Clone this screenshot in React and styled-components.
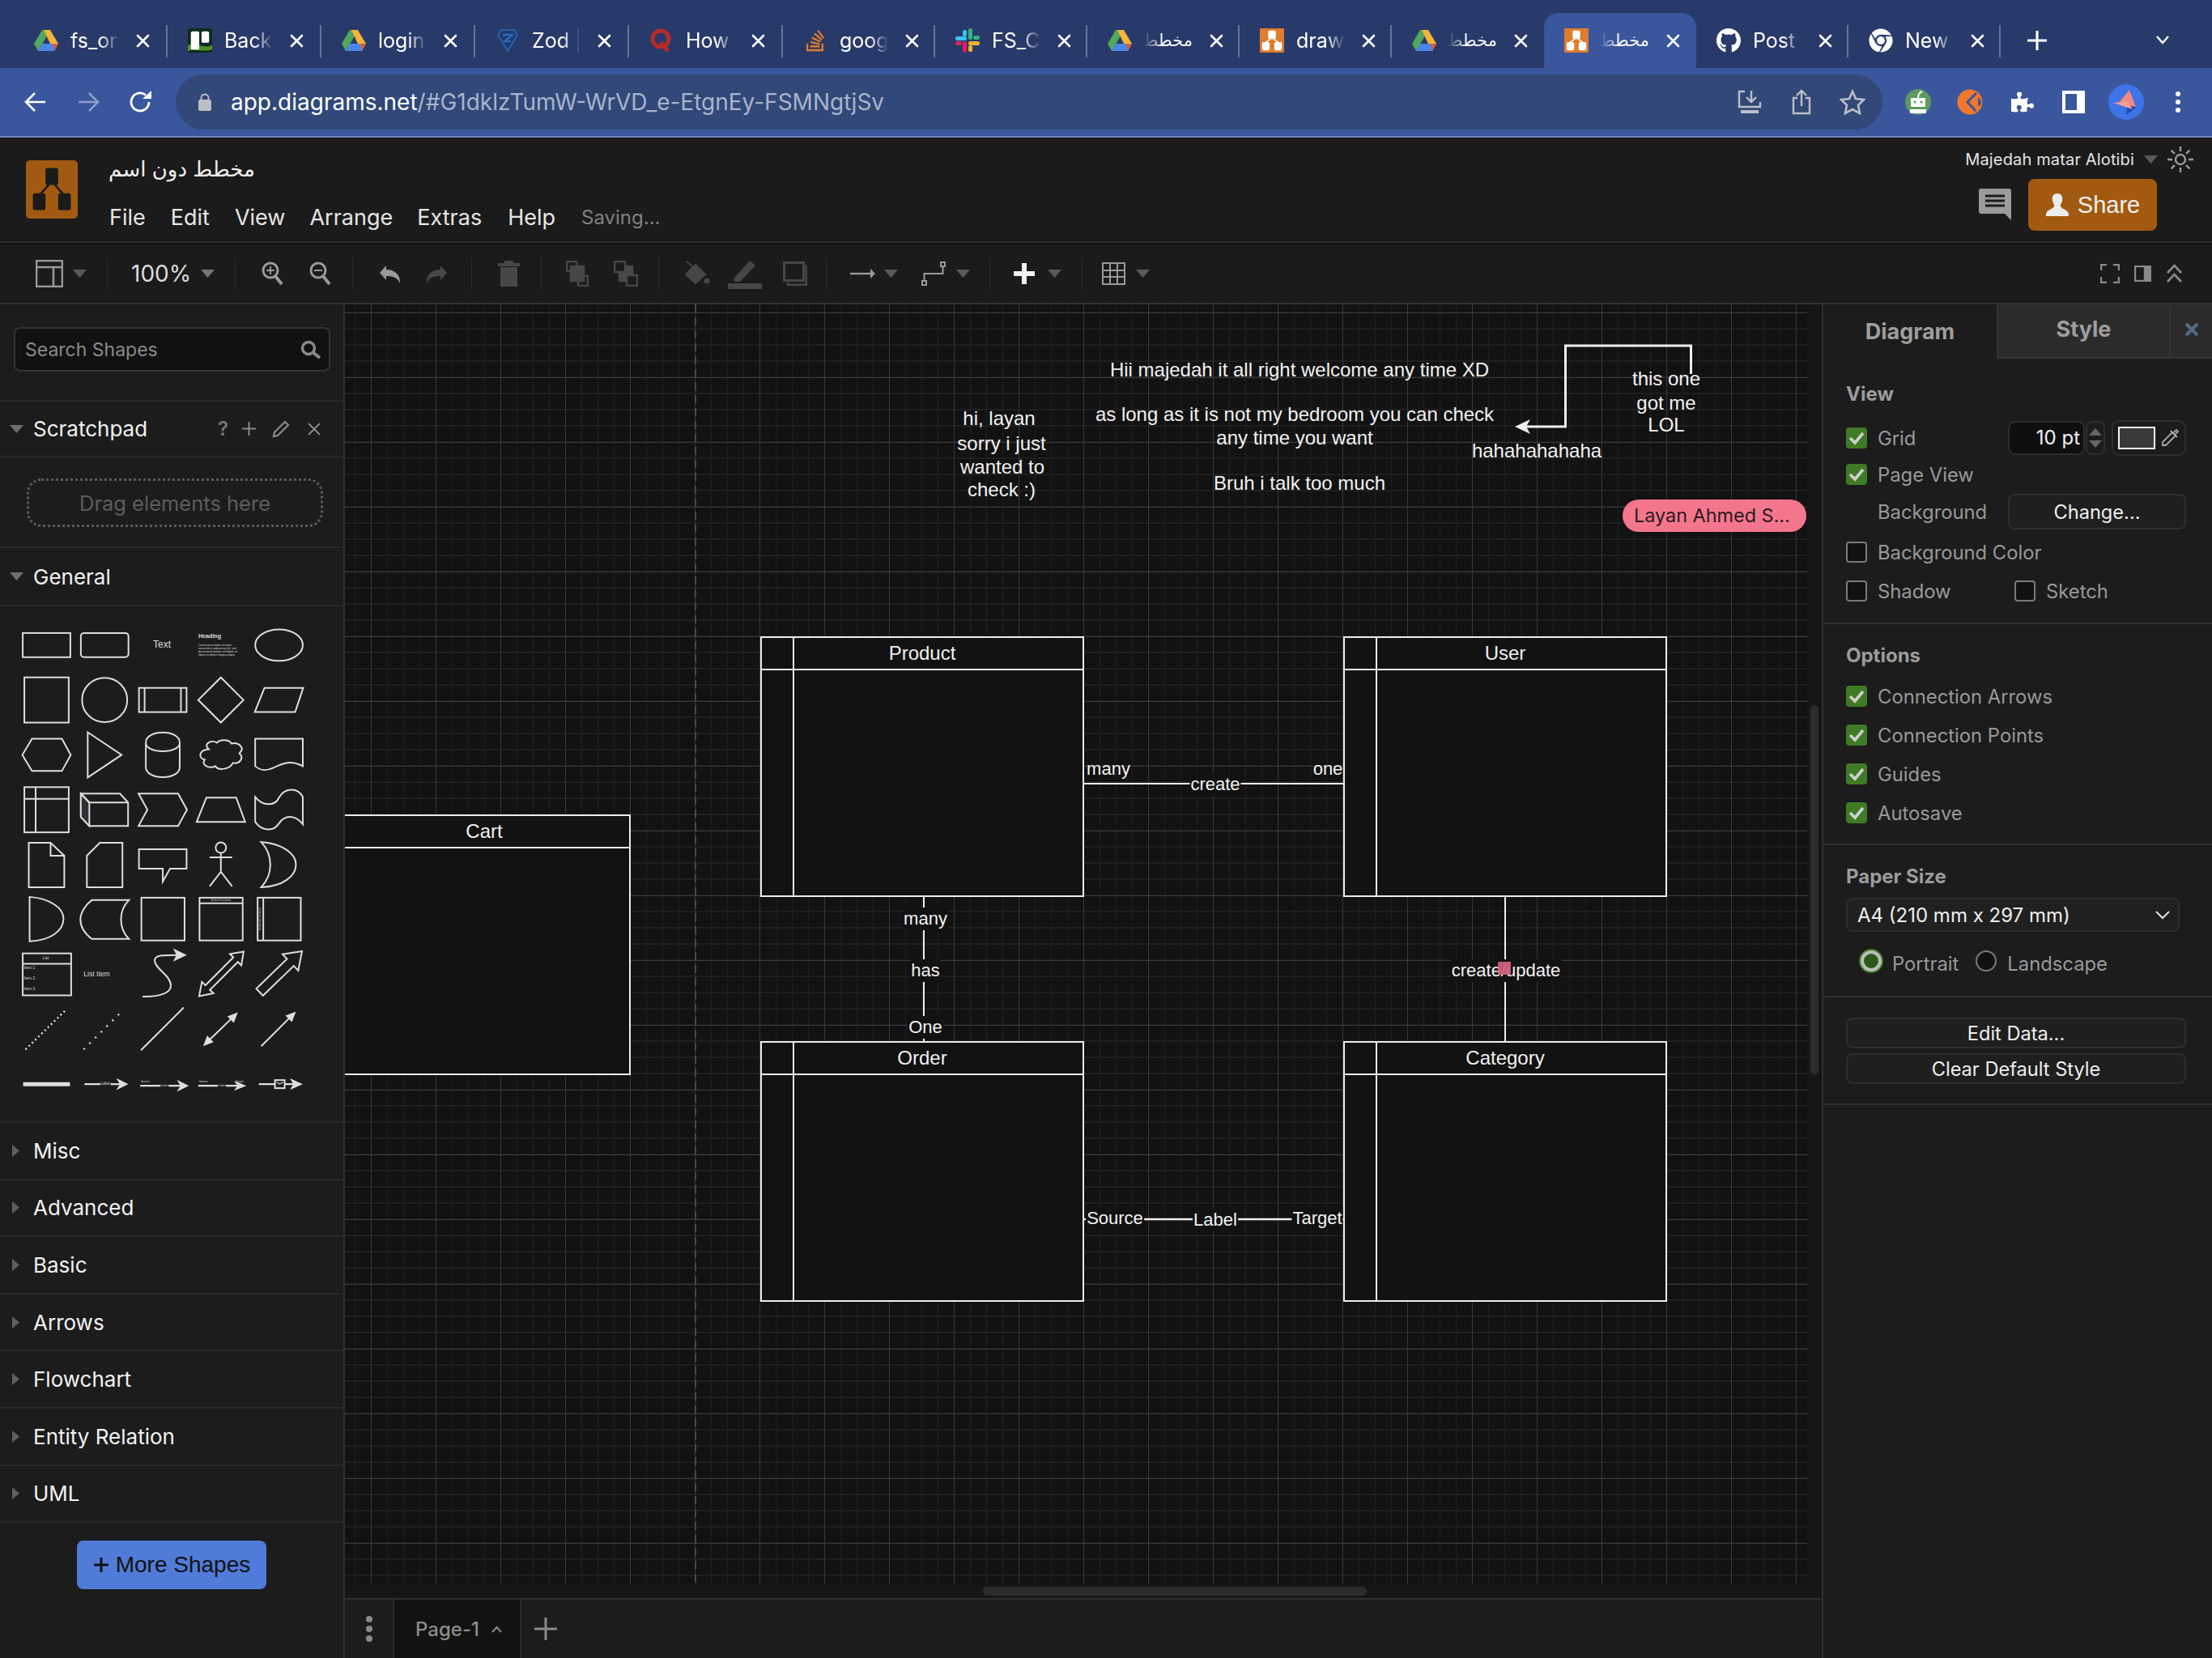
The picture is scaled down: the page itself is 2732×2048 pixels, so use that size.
import React from "react";
import styled, { createGlobalStyle } from "styled-components";
import { FaGithub, FaChrome, FaStackOverflow, FaPuzzlePiece } from "react-icons/fa";

const Global = createGlobalStyle`
  html, body { margin: 0; padding: 0; background: #1c1c1c; }
  body { font-family: Inter, "DejaVu Sans", sans-serif; width: 2732px; height: 2048px; overflow: hidden; }
  * { box-sizing: border-box; }
`;

/* ---------- browser chrome ---------- */
const Shell = styled.div`width: 2732px; height: 2048px; display: flex; flex-direction: column; overflow: hidden;`;
const TabStrip = styled.div`height: 84px; background: #283a69; padding: 16px 0 0 17px; display: flex; align-items: stretch; flex: none;`;
const Tab = styled.div`
  position: relative; width: ${p => p.$w}px; display: flex; align-items: center; padding: 0 0 0 25px; color: #fff; flex: none;
  background: ${p => (p.$active ? "#3a569c" : "transparent")};
  border-radius: ${p => (p.$active ? "18px 18px 0 0" : "0")};
  &::after {
    content: ""; display: ${p => (p.$noSep ? "none" : "block")}; position: absolute; right: 0; top: 15px; width: 2px; height: 40px; background: #65759c;
  }
`;
const TabIcon = styled.span`width: 30px; height: 32px; display: flex; align-items: center; justify-content: center; flex: none;`;
const TabTitle = styled.span`
  width: 60px; margin-left: 15px; overflow: hidden; white-space: nowrap; line-height: 32px; flex: none;
  direction: ${p => (p.$rtl ? "rtl" : "ltr")};
  font-size: ${p => (p.$rtl ? "21px" : "25px")};
  -webkit-mask-image: linear-gradient(${p => (p.$rtl ? "to left" : "to right")}, #000 62%, transparent 100%);
  mask-image: linear-gradient(${p => (p.$rtl ? "to left" : "to right")}, #000 62%, transparent 100%);
`;
const TabClose = styled.svg`width: 17px; height: 17px; margin-left: 21px; flex: none;`;
const NewTab = styled.svg`width: 26px; height: 26px; margin: 21px 0 0 32px; flex: none;`;
const TabChevron = styled.svg`width: 18px; height: 12px; margin: 27px 0 0 133px; flex: none;`;

const ChromeBar = styled.div`
  height: 86px; background: #3a569c; border-bottom: 2px solid #6f86bb; display: flex; align-items: center; padding-left: 30px; flex: none;
`;
const NavIcon = styled.svg`width: 28px; height: 28px; margin-right: ${p => p.$mr || 37}px; flex: none;`;
const Omnibox = styled.div`
  width: 2108px; height: 68px; margin-left: -8px; border-radius: 34px; background: #314878; display: flex; align-items: center; padding: 0 21px 0 28px; flex: none;
`;
const Url = styled.div`margin-left: 24px; font-size: 28px; color: #fff; white-space: nowrap; flex: 1;`;
const UrlDim = styled.span`color: #a9b4cc;`;
const OmniIcon = styled.svg`width: 32px; height: 32px; margin-left: ${p => p.$ml || 0}px; flex: none;`;
const ExtRow = styled.div`display: flex; align-items: center; flex: none;`;
const ExtSlot = styled.span`display: flex; margin-left: ${p => p.$ml}px; color: #fff;`;

/* ---------- app header ---------- */
const Header = styled.header`height: 130px; background: #1b1b1b; border-bottom: 2px solid #2e2e2e; display: flex; padding-left: 32px; flex: none;`;
const Logo = styled.div`width: 64px; height: 72px; margin-top: 28px; background: #a25a12; border-radius: 5px; display: flex; align-items: center; justify-content: center; flex: none;`;
const TitleCol = styled.div`margin-left: 39px; flex: 1;`;
const DocTitle = styled.div`margin-top: 19px; width: 180px; height: 40px; line-height: 40px; font-size: 26px; color: #f0f0f0; white-space: nowrap; direction: rtl;`;
const MenuBar = styled.nav`margin-top: 21px; display: flex; align-items: center; height: 36px;`;
const MenuItem = styled.span`font-size: 27px; color: #e6e6e6; margin-right: ${p => p.$mr}px;`;
const Saving = styled.span`font-size: 24px; color: #808080;`;
const HeadRight = styled.div`width: 310px; display: flex; flex-direction: column; align-items: flex-end; padding-right: 22px; flex: none;`;
const UserRow = styled.div`margin-top: 10px; height: 34px; display: flex; align-items: center;`;
const UserName = styled.span`font-size: 20px; color: #e4e4e4; white-space: nowrap; letter-spacing: .15px;`;
const SunIcon = styled.svg`width: 34px; height: 34px; margin-left: 11px;`;
const ShareRow = styled.div`margin-top: 7px; padding-right: 46px; display: flex; align-items: center;`;
const ShareBtn = styled.div`
  width: 159px; height: 64px; margin-left: 21px; background: #a25a10; border-radius: 8px; display: flex; align-items: center; justify-content: center; gap: 10px;
  color: #f0f0f0; font-size: 29px; font-family: "Liberation Sans", sans-serif;
`;

/* ---------- toolbar ---------- */
const Toolbar = styled.div`height: 76px; background: #1b1b1b; border-top: 2px solid #121212; border-bottom: 2px solid #333; display: flex; align-items: center; flex: none;`;
const ToolGroup = styled.div`
  width: ${p => p.$w}px; height: 40px; padding-left: ${p => p.$pl}px; gap: ${p => p.$gap || 0}px; display: flex; align-items: center; flex: none;
  border-right: ${p => (p.$last ? "none" : "1px solid #2b2b2b")};
`;
const ToolSvg = styled.svg`margin-left: ${p => p.$ml || 0}px; flex: none;`;
const ToolRight = styled.div`margin-left: auto; padding-right: 36px; display: flex; align-items: center; gap: 18px;`;
const ZoomValue = styled.span`font-size: 28px; color: #dcdcdc; width: 86px;`;
const Caret = styled.svg`width: 17px; height: 10px; flex: none; margin-left: ${p => p.$ml || 0}px;`;

/* ---------- body ---------- */
const Body = styled.div`flex: 1; min-height: 0; display: grid; grid-template-columns: 424px 1fr 482px;`;
const Sidebar = styled.aside`background: #1c1c1c; display: flex; flex-direction: column; min-height: 0;`;
const SearchWrap = styled.div`height: 120px; padding: 28px 16px 0 17px; border-bottom: 2px solid #292929;`;
const SearchBox = styled.div`height: 55px; background: #111; border: 2px solid #333; border-radius: 8px; display: flex; align-items: center; justify-content: space-between; padding: 0 10px 0 12px;`;
const SearchText = styled.span`font-size: 23px; color: #8a8a8a;`;
const SectionHead = styled.div`
  height: ${p => p.$h || 70}px; display: flex; align-items: center; border-bottom: 2px solid #292929; padding-left: ${p => (p.$open ? 12 : 15)}px; flex: none;
`;
const SectionLabel = styled.span`font-size: ${p => p.$size || 26}px; color: #f2f2f2; margin-left: ${p => p.$ml}px; flex: ${p => (p.$grow ? 1 : "none")};`;
const HeadTools = styled.div`display: flex; align-items: center; color: #8a8a8a; padding-right: 28px;`;
const HeadTool = styled.svg`margin-left: ${p => p.$ml}px; flex: none;`;
const QMark = styled.span`font-size: 24px; color: #777; font-weight: 600;`;
const DropWrap = styled.div`height: 112px; padding: 26px 25px 0 33px; border-bottom: 2px solid #292929; flex: none;`;
const DropZone = styled.div`height: 60px; border: 3px dotted #5a5a5a; border-radius: 18px; display: flex; align-items: center; justify-content: center; color: #5c5c5c; font-size: 25.5px;`;
const Palette = styled.svg`width: 424px; height: 638px; display: block; flex: none; border-bottom: 2px solid #292929;`;
const MoreWrap = styled.div`padding: 22px 0 0 95px;`;
const MoreBtn = styled.div`
  width: 234px; height: 60px; background: #507bd8; border-radius: 8px; display: flex; align-items: center; justify-content: center; gap: 8px;
  color: #111; font-size: 28px; font-family: "Liberation Sans", sans-serif;
`;

/* ---------- canvas ---------- */
const CanvasCol = styled.main`display: flex; flex-direction: column; min-width: 0; background: #161616; border-left: 2px solid #2e2e2e;`;
const CanvasArea = styled.div`flex: 1; position: relative; min-height: 0; overflow: hidden; border-bottom: 2px solid #2e2e2e;`;
const GridPane = styled.div`
  position: absolute; left: -2px; top: 0; width: 1808px; height: 1580px; overflow: hidden; background-color: #121212;
  background-image:
    linear-gradient(to bottom, #3a3a3a 1px, transparent 1px),
    linear-gradient(to right, #383838 1px, transparent 1px),
    linear-gradient(to bottom, #1f1f1f 2px, transparent 2px),
    linear-gradient(to right, #1f1f1f 1px, transparent 1px);
  background-size: 80px 80px, 80px 80px, 20px 20px, 20px 20px;
  background-position: 0 10px, 34px 0, 0 9px, 14px 0;
  font-family: "Liberation Sans", sans-serif; color: #f0f0f0;
`;
const Wires = styled.svg`position: absolute; left: 0; top: 0; width: 1808px; height: 1580px;`;
const Lane = styled.div`
  position: absolute; left: ${p => p.$x}px; top: ${p => p.$y}px; width: ${p => p.$w}px; height: 322px;
  background: #121212; border: 2px solid #ececec;
`;
const LaneHead = styled.div`height: 40px; line-height: 38px; text-align: center; font-size: 24px; border-bottom: 2px solid #ececec;`;
const LaneRail = styled.span`position: absolute; left: 38px; top: 0; bottom: 0; width: 2px; background: #ececec;`;
const Note = styled.div`
  position: absolute; left: ${p => p.$x}px; top: ${p => p.$y}px; transform: translate(-50%, -50%); white-space: nowrap; font-size: ${p => p.$size || 24}px; line-height: 28px; color: #f2f2f2;
  background: ${p => (p.$bg ? "#121212" : "transparent")}; padding: 0 ${p => (p.$bg ? 1 : 0)}px;
`;
const Pill = styled.div`
  position: absolute; left: 1580px; top: 241px; width: 227px; height: 40px; border-radius: 20px; background: #f4768c; color: #2a1a20; font-size: 23.4px; line-height: 40px; padding-left: 14px; white-space: nowrap; font-family: Inter, sans-serif;
`;
const RemoteCursor = styled.span`position: absolute; left: 1426px; top: 812px; width: 16px; height: 16px; background: #d1607b; opacity: .95;`;
const VScroll = styled.span`position: absolute; left: 1810px; top: 495px; width: 10px; height: 456px; border-radius: 5px; background: #2c2c2c;`;
const HScroll = styled.span`position: absolute; left: 788px; top: 1584px; width: 474px; height: 11px; border-radius: 5px; background: #2c2c2c;`;
const PageBar = styled.div`height: 72px; background: #1c1c1c; display: flex; align-items: stretch; flex: none;`;
const PageMenu = styled.div`width: 61px; display: flex; align-items: center; justify-content: center; border-right: 2px solid #2b2b2b;`;
const PageTab = styled.div`width: 157px; background: #121212; border-right: 2px solid #2b2b2b; display: flex; align-items: center; padding-left: 26px; gap: 15px; color: #8c8c8c; font-size: 24px; font-weight: 500;`;
const PageAdd = styled.div`display: flex; align-items: center; padding-left: 16px;`;

/* ---------- right panel ---------- */
const Panel = styled.aside`background: #1c1c1c; border-left: 2px solid #2e2e2e; display: flex; flex-direction: column;`;
const PanelTabs = styled.div`height: 67px; display: flex; flex: none;`;
const PanelTab = styled.div`
  width: ${p => p.$w}px; display: flex; align-items: center; justify-content: center; font-size: 27px; font-weight: 700; color: #9e9e9e;
  background: ${p => (p.$active ? "#1c1c1c" : "#2b2b2b")};
  border-left: ${p => (p.$active ? "none" : "2px solid #333")};
  border-bottom: ${p => (p.$active ? "none" : "2px solid #333")};
  padding-bottom: ${p => (p.$active ? 0 : 4)}px;
`;
const PanelClose = styled(PanelTab)`flex: 1;`;
const PanelSection = styled.section`
  padding: ${p => p.$pt}px 30px ${p => p.$pb}px 28px; border-bottom: 2px solid #2e2e2e; flex: none;
`;
const SectionTitle = styled.div`height: 30px; line-height: 30px; font-size: 24px; font-weight: 700; color: #9c9c9c;`;
const Row = styled.div`height: ${p => p.$h}px; margin-top: ${p => p.$mt || 0}px; display: flex; align-items: center;`;
const CheckBox = styled.span`
  width: 26px; height: 26px; border-radius: 4px; flex: none; display: flex; align-items: center; justify-content: center;
  background: ${p => (p.$on ? "#3f7b25" : "#111")};
  border: ${p => (p.$on ? "none" : "2px solid #7b7b7b")};
`;
const RowLabel = styled.span`margin-left: ${p => p.$ml ?? 13}px; font-size: 23.8px; color: #999; white-space: nowrap; width: ${p => (p.$w ? p.$w + "px" : "auto")}; flex: none;`;
const NumInput = styled.div`width: 95px; height: 42px; border-radius: 9px; background: #0f0f0f; border: 2px solid #2e2e2e; color: #f2f2f2; font-size: 24px; line-height: 38px; text-align: right; padding-right: 4px; margin-left: 1px;`;
const Stepper = styled.div`width: 24px; height: 42px; margin-left: 1px; border: 2px solid #2e2e2e; border-radius: 8px; display: flex; flex-direction: column; align-items: center; justify-content: space-evenly;`;
const ColorBtn = styled.div`width: 92px; height: 44px; margin-left: 8px; border: 2px solid #2e2e2e; border-radius: 9px; display: flex; align-items: center; padding-left: 6px; gap: 6px; color: #aaa;`;
const Swatch = styled.span`width: 46px; height: 28px; background: #3a3a3a; border: 2px solid #f2f2f2;`;
const FlatBtn = styled.div`
  width: ${p => p.$w || 420}px; height: ${p => p.$h}px; margin-top: ${p => p.$mt || 0}px; background: #1f1f1f; border: 2px solid #2e2e2e; border-radius: 8px; color: #efefef; font-size: 23.6px;
  display: flex; align-items: center; justify-content: center; flex: none;
`;
const SelectBox = styled.div`width: 412px; height: 42px; margin-top: 11px; background: #202020; border: 2px solid #2e2e2e; border-radius: 8px; color: #efefef; font-size: 24px; display: flex; align-items: center; justify-content: space-between; padding: 0 10px 0 12px;`;
const Radio = styled.span`
  width: 26px; height: 26px; border-radius: 50%; flex: none; margin-left: ${p => p.$ml}px; margin-top: -6px;
  background: ${p => (p.$on ? "#2c5a18" : "#111")};
  border: ${p => (p.$on ? "4px solid #bdbdbd" : "2px solid #7b7b7b")};
  box-shadow: ${p => (p.$on ? "0 0 0 2px #3f7b25" : "none")};
`;

/* ---------- icons ---------- */
const Drive = () => (
  <svg width="30" height="26" viewBox="0 0 30 26">
    <polygon points="10,0 20,0 15,9 5,26 0,17" fill="#52a75c" />
    <polygon points="12,0 20,0 30,17 20,17" fill="#f3b437" />
    <polygon points="10,17 30,17 25,26 5,26" fill="#4a86e8" />
    <polygon points="23,17 30,17 25,26" fill="#dd5a36" />
  </svg>
);
const Trello = () => (
  <svg width="32" height="32" viewBox="0 0 32 32">
    <rect width="32" height="32" rx="3" fill="#0f2a1e" />
    <path d="M0 22 C10 18 22 28 32 22 V28 C20 32 10 26 0 30Z" fill="#4d8f2a" />
    <rect x="4" y="4" width="11" height="24" rx="2" fill="#fff" />
    <rect x="18" y="4" width="10" height="15" rx="2" fill="#fff" />
  </svg>
);
const Zod = () => (
  <svg width="28" height="30" viewBox="0 0 28 30">
    <polygon points="6,2 22,2 26,8 14,28 2,8" fill="#1c3b70" stroke="#3068b7" strokeWidth="1.5" />
    <path d="M8 8 L20 8 L10 16 L18 16" stroke="#3068b7" strokeWidth="2.5" fill="none" />
  </svg>
);
const Quora = () => (
  <svg width="28" height="30" viewBox="0 0 28 30">
    <circle cx="13" cy="13" r="10" fill="none" stroke="#b92b27" strokeWidth="5" />
    <path d="M13 17 L22 28" stroke="#b92b27" strokeWidth="5" />
  </svg>
);
const Slack = () => (
  <svg width="30" height="30" viewBox="0 0 30 30">
    <rect x="0" y="10" width="14" height="5" rx="2.5" fill="#36c5f0" /><rect x="9" y="2" width="5" height="8" rx="2.5" fill="#36c5f0" />
    <rect x="16" y="0" width="5" height="14" rx="2.5" fill="#2eb67d" /><rect x="22" y="9" width="8" height="5" rx="2.5" fill="#2eb67d" />
    <rect x="16" y="16" width="14" height="5" rx="2.5" fill="#ecb22e" /><rect x="16" y="21" width="5" height="8" rx="2.5" fill="#ecb22e" />
    <rect x="9" y="16" width="5" height="14" rx="2.5" fill="#e01e5a" /><rect x="0" y="16" width="8" height="5" rx="2.5" fill="#e01e5a" />
  </svg>
);
const Nodes = ({ c, size = 40 }) => (
  <svg width={size} height={size * 1.1} viewBox="0 0 40 44">
    <rect x="14" y="2" width="12" height="16" rx="2" fill={c} />
    <rect x="2" y="26" width="12" height="16" rx="2" fill={c} />
    <rect x="26" y="26" width="12" height="16" rx="2" fill={c} />
    <path d="M17 18 L9 27 M23 18 L31 27" stroke={c} strokeWidth="2" />
  </svg>
);
const DrawTab = () => (
  <svg width="32" height="32" viewBox="0 0 32 32">
    <rect width="32" height="32" rx="1" fill="#df7c2d" />
    <rect x="11" y="3" width="10" height="11" rx="2" fill="#fff" /><rect x="3" y="18" width="10" height="11" rx="2" fill="#fff" /><rect x="19" y="18" width="10" height="11" rx="2" fill="#fff" />
    <path d="M14 14 L8 18 M18 14 L24 18" stroke="#fff" strokeWidth="1.5" />
  </svg>
);
const tabs = [
  { icon: <Drive />, t: "fs_or" },
  { icon: <Trello />, t: "Back" },
  { icon: <Drive />, t: "login" },
  { icon: <Zod />, t: "Zod |" },
  { icon: <Quora />, t: "How" },
  { icon: <FaStackOverflow size={30} color="#e07b2c" />, t: "goog" },
  { icon: <Slack />, t: "FS_C" },
  { icon: <Drive />, t: "مخطط", rtl: true },
  { icon: <DrawTab />, t: "draw" },
  { icon: <Drive />, t: "مخطط", rtl: true, noSep: true },
  { icon: <DrawTab />, t: "مخطط", rtl: true, active: true, noSep: true },
  { icon: <FaGithub size={32} color="#fff" />, t: "Post" },
  { icon: <FaChrome size={30} color="#fff" />, t: "New" },
];
const X = ({ c = "#fff", w = 2.6 }) => (
  <TabClose viewBox="0 0 17 17"><path d="M2 2 L15 15 M15 2 L2 15" stroke={c} strokeWidth={w} strokeLinecap="round" /></TabClose>
);
const CaretDown = ({ c = "#5a5a5a", ml }) => <Caret $ml={ml} viewBox="0 0 17 10"><polygon points="0,0 17,0 8.5,10" fill={c} /></Caret>;
const G = "#999";
const D = "#474747";
const ZoomIcon = ({ minus }) => (
  <svg width="28" height="32" viewBox="0 0 28 32" fill="none" stroke={G} strokeWidth="3">
    <circle cx="12" cy="12" r="9" />
    <path d="M7 12 H17" strokeWidth="2" />
    {!minus && <path d="M12 7 V17" strokeWidth="2" />}
    <path d="M18 19 L26 29" strokeWidth="4" />
  </svg>
);
const Check = () => (
  <svg width="20" height="18" viewBox="0 0 20 18"><path d="M2 9 L8 15 L18 3" fill="none" stroke="#cfcfcf" strokeWidth="3.6" /></svg>
);
const L = ({ x1, y1, x2, y2, ...r }) => <line x1={x1} y1={y1} x2={x2} y2={y2} {...r} />;

const T = ({ x, y, s, a, c = "#dedede", w, ...r }) => (
  <text x={x} y={y} fontSize={s} textAnchor={a} fill={c} stroke="none" fontWeight={w} fontFamily="Liberation Sans, sans-serif" dominantBaseline="middle" {...r} />
);

const PaletteArt = () => (
  <Palette viewBox="0 748 424 638" fill="none" stroke="#dedede" strokeWidth="2">
    <rect x="27.5" y="781" width="59" height="30" />
    <rect x="99.5" y="781" width="59" height="30" rx="4" />
    <T x="200" y="796" s="12" a="middle">Text</T>
    <T x="245" y="785" s="7.2" w="700">Heading</T>
    <T x="245" y="796" s="3.4">Lorem ipsum dolor sit amet,</T>
    <T x="245" y="800" s="3.4">consectetur adipisicing elit, sed</T>
    <T x="245" y="804" s="3.4">do eiusmod tempor incididunt ut</T>
    <T x="245" y="808" s="3.4">labore et dolore magna aliqua.</T>
    <ellipse cx="345" cy="796" rx="29.5" ry="19.5" />

    <rect x="29.5" y="836" width="55" height="56" />
    <ellipse cx="129" cy="864" rx="28" ry="27.5" />
    <rect x="171.5" y="849" width="59" height="30" />
    <path d="M178.5 849 V879 M223.5 849 V879" />
    <polygon points="273,836 301,864 273,892 245,864" />
    <polygon points="327,849 375,849 365,879 315,879" />

    <polygon points="27,932 39,912 76,912 87,932 76,952 39,952" />
    <polygon points="108,904 150,932 108,960" />
    <path d="M180 917 C180 900 222 900 222 917 V947 C222 964 180 964 180 947 Z M180 917 C180 931 222 931 222 917" />
    <path d="M258 925 C250 918 262 913 268 917 C272 912 284 913 286 918 C296 916 303 924 296 930 C302 936 296 944 288 942 C284 950 270 952 266 946 C258 950 248 944 253 938 C245 936 245 926 258 925 Z" />
    <path d="M315.5 912 H374.5 V946 C360 938 350 942 338 948 C328 953 320 950 315.5 946 Z" />

    <rect x="29.5" y="972" width="55" height="56" />
    <path d="M43.5 972 V1028 M29.5 986.5 H84.5" />
    <polygon points="99.5,980 148,980 158,991 158,1020 110,1020 99.5,1009" />
    <polygon points="99.5,980 110,991 110,1020 99.5,1009" fill="#2e3136" />
    <path d="M110 991 H158 M99.5 980 L110 991" />
    <polygon points="171,980 220,980 231,1000 220,1020 171,1020 182,1000" />
    <polygon points="255,985 292,985 303,1015 243,1015" />
    <path d="M315.5 984 C325 996 340 996 345 985 C352 972 368 972 374.5 984 V1018 C365 1006 352 1006 345 1017 C338 1028 323 1026 315.5 1015 Z" />

    <polygon points="35,1041 62,1041 79,1057 79,1096 35,1096" />
    <path d="M62 1041 V1057 H79" />
    <polygon points="123,1041 151,1041 151,1096 107,1096 107,1057" />
    <polygon points="171.5,1049 230.5,1049 230.5,1073 210,1073 201,1089 201,1073 171.5,1073" />
    <circle cx="273" cy="1047" r="6.5" />
    <path d="M273 1054 V1077 M259 1059 H287 M259 1095 L273 1077 L287 1095" />
    <path d="M323 1040 C350 1042 366 1055 366 1068 C366 1082 350 1095 323 1096 C338 1080 338 1056 323 1040 Z" />

    <path d="M36 1108 C62 1110 78 1122 78 1135 C78 1150 62 1162 36 1163 Z" />
    <path d="M113 1112 H159 C146 1125 146 1147 159 1160 H113 C105 1154 99 1146 99 1136 C99 1128 105 1118 113 1112 Z" />
    <rect x="174.5" y="1109" width="53.5" height="53" />
    <rect x="246.5" y="1109" width="53.5" height="53" />
    <path d="M246.5 1116 H300" />
    <T x="273" y="1112.5" s="3.2" a="middle">Vertical Container</T>
    <rect x="318.5" y="1109" width="53.5" height="53" />
    <path d="M325.5 1109 V1162" />
    <T x="322" y="1135" s="3.2" a="middle" transform="rotate(-90 322 1135)">Horizontal Container</T>

    <rect x="27.5" y="1178" width="60" height="52" />
    <path d="M27.5 1191 H87.5" />
    <T x="56" y="1184.5" s="5" a="middle">List</T>
    <T x="29" y="1196" s="5">Item 1</T>
    <T x="29" y="1209" s="5">Item 2</T>
    <T x="29" y="1222" s="5">Item 3</T>
    <T x="103" y="1204" s="8.6">List Item</T>
    <path d="M176 1231.5 C200 1232 211 1226 211 1218 C211 1205 191 1197 191 1187 C191 1180 200 1180 220 1180" />
    <polygon points="216,1174 228.5,1180 216,1186 219,1180" fill="#dedede" />
    <polygon transform="translate(246,1231) rotate(-45)" points="0,0 15,-10 15,-4 64,-4 64,-10 78,0 64,10 64,4 15,4 15,10" />
    <polygon transform="translate(321,1226) rotate(-44)" points="0,-6 53,-6 53,-14 73,0 53,14 53,6 0,6" />

    <L x1="31" y1="1297" x2="82" y2="1247" strokeWidth="2.4" strokeDasharray="2 3.5" />
    <L x1="103" y1="1297" x2="151" y2="1249" strokeWidth="2.4" strokeDasharray="2 8" />
    <L x1="174" y1="1298" x2="227" y2="1245" />
    <L x1="256" y1="1288" x2="289" y2="1256" />
    <polygon points="251,1293 256,1280 264,1288" fill="#dedede" stroke="none" />
    <polygon points="294,1251 289,1264 281,1256" fill="#dedede" stroke="none" />
    <L x1="323" y1="1293" x2="360" y2="1256" />
    <polygon points="366,1250 361,1263 353,1255" fill="#dedede" stroke="none" />

    <L x1="28" y1="1340" x2="86" y2="1340" strokeWidth="5" />
    <L x1="104" y1="1340" x2="150" y2="1340" strokeWidth="2.2" />
    <polygon points="156,1340 146,1335 149,1340 146,1345" fill="#dedede" />
    <T x="130" y="1340" s="4.5" a="middle" paintOrder="stroke" stroke="#1c1c1c" strokeWidth="2">Label</T>
    <L x1="173" y1="1342" x2="226" y2="1342" strokeWidth="2.2" />
    <polygon points="231,1342 221,1337 224,1342 221,1347" fill="#dedede" />
    <T x="174" y="1337" s="3.4">Source</T>
    <T x="203" y="1342" s="3.4" a="middle" paintOrder="stroke" stroke="#1c1c1c" strokeWidth="2">Label</T>
    <L x1="245" y1="1342" x2="298" y2="1342" strokeWidth="2.2" />
    <polygon points="302,1342 292,1338 295,1342 292,1346" fill="#dedede" />
    <T x="246" y="1337" s="3.4">Source</T>
    <T x="274" y="1342" s="3.4" a="middle" paintOrder="stroke" stroke="#1c1c1c" strokeWidth="2">Label</T>
    <T x="301" y="1337" s="3.4" a="end">Target</T>
    <L x1="320" y1="1340" x2="366" y2="1340" strokeWidth="2.2" />
    <polygon points="372,1340 361,1335 364,1340 361,1345" fill="#dedede" />
    <rect x="340" y="1335" width="12" height="10" fill="#1c1c1c" strokeWidth="2" />
    <path d="M342 1337.5 L346 1340 L350 1337.5" strokeWidth="1.2" />
  </Palette>
);

const categories = ["Misc", "Advanced", "Basic", "Arrows", "Flowchart", "Entity Relation", "UML"];

export default function App() {
  return (
    <Shell>
      <Global />
      <TabStrip>
        {tabs.map((t, i) => (
          <Tab key={i} $w={i < 5 ? 190 : 188} $active={t.active} $noSep={t.noSep}>
            <TabIcon>{t.icon}</TabIcon>
            <TabTitle $rtl={t.rtl}>{t.t}</TabTitle>
            <X />
          </Tab>
        ))}
        <NewTab viewBox="0 0 26 26"><path d="M13 1 V25 M1 13 H25" stroke="#fff" strokeWidth="3" /></NewTab>
        <TabChevron viewBox="0 0 18 12"><path d="M2 2 L9 10 L16 2" fill="none" stroke="#fff" strokeWidth="2.4" /></TabChevron>
      </TabStrip>

      <ChromeBar>
        <NavIcon viewBox="0 0 28 28"><path d="M26 14 H3 M13 3 L2 14 L13 25" fill="none" stroke="#fff" strokeWidth="2.6" /></NavIcon>
        <NavIcon viewBox="0 0 28 28"><path d="M2 14 H25 M15 3 L26 14 L15 25" fill="none" stroke="#8ea0c9" strokeWidth="2.6" /></NavIcon>
        <NavIcon viewBox="0 0 28 28"><path d="M24 14 A11 11 0 1 1 20 5.5" fill="none" stroke="#fff" strokeWidth="2.8" /><polygon points="16,10 27,10 27,0" fill="#fff" /></NavIcon>
        <Omnibox>
          <svg width="16" height="22" viewBox="0 0 16 22"><rect x="0" y="8" width="16" height="14" rx="2.5" fill="#bcbfc6" /><path d="M3.5 9 V6 A4.5 4.5 0 0 1 12.5 6 V9" fill="none" stroke="#bcbfc6" strokeWidth="2" /></svg>
          <Url>app.diagrams.net<UrlDim>/#G1dklzTumW-WrVD_e-EtgnEy-FSMNgtjSv</UrlDim></Url>
          <OmniIcon viewBox="0 0 32 32" fill="none" stroke="#bcbfc6" strokeWidth="2.4">
            <path d="M10 3 H3 V22 H29 V16" /><path d="M18 2 V15 M12 10 L18 16 L24 10" /><path d="M5 28 H27" strokeWidth="4" />
          </OmniIcon>
          <OmniIcon $ml={32} viewBox="0 0 32 32" fill="none" stroke="#bcbfc6" strokeWidth="2.4">
            <path d="M11 11 H6 V30 H26 V11 H21" /><path d="M16 21 V2 M10 8 L16 2 L22 8" />
          </OmniIcon>
          <OmniIcon $ml={31} viewBox="0 0 32 32" fill="none" stroke="#bcbfc6" strokeWidth="2.6">
            <polygon points="16,3 20,12 30,13 23,20 25,30 16,25 7,30 9,20 2,13 12,12" />
          </OmniIcon>
        </Omnibox>
        <ExtRow>
          <ExtSlot $ml={28}>
            <svg width="32" height="32" viewBox="0 0 32 32">
              <circle cx="16" cy="16" r="16" fill="#5e9a5f" />
              <rect x="7" y="11" width="18" height="11" rx="1" fill="#fff" /><circle cx="12" cy="16" r="1.5" fill="#5e9a5f" /><circle cx="20" cy="16" r="1.5" fill="#5e9a5f" />
              <path d="M16 11 C16 7 18 4 21 3" stroke="#fff" strokeWidth="2" fill="none" /><rect x="6" y="25" width="20" height="5" fill="#fff" />
            </svg>
          </ExtSlot>
          <ExtSlot $ml={32}>
            <svg width="32" height="32" viewBox="0 0 32 32">
              <circle cx="16" cy="16" r="15.5" fill="#f0782d" />
              <path d="M24 5 L13 16 L23 27" fill="none" stroke="#3a569c" strokeWidth="3" /><path d="M26 11 A4 5 0 0 1 26 21 Z" fill="#3a569c" />
            </svg>
          </ExtSlot>
          <ExtSlot $ml={35}><FaPuzzlePiece size={28} /></ExtSlot>
          <ExtSlot $ml={35}>
            <svg width="28" height="28" viewBox="0 0 28 28"><rect width="28" height="28" fill="#fff" /><rect x="4" y="4" width="14" height="20" fill="#3a569c" /></svg>
          </ExtSlot>
          <ExtSlot $ml={29}>
            <svg width="44" height="44" viewBox="0 0 44 44">
              <circle cx="22" cy="22" r="22" fill="#3f73e8" />
              <polygon points="26,7 34,29 22,38" fill="#1d4aa8" />
              <polygon points="26,7 34,28 12,24" fill="#ee8a80" />
              <polygon points="6,23 24,22 30,31" fill="#f2a095" />
            </svg>
          </ExtSlot>
          <ExtSlot $ml={38}>
            <svg width="8" height="28" viewBox="0 0 8 28"><circle cx="4" cy="4" r="3" fill="#fff" /><circle cx="4" cy="14" r="3" fill="#fff" /><circle cx="4" cy="24" r="3" fill="#fff" /></svg>
          </ExtSlot>
        </ExtRow>
      </ChromeBar>

      <Header>
        <Logo><Nodes c="#1b1b1b" size={52} /></Logo>
        <TitleCol>
          <DocTitle>مخطط دون اسم</DocTitle>
          <MenuBar>
            <MenuItem $mr={31}>File</MenuItem>
            <MenuItem $mr={31}>Edit</MenuItem>
            <MenuItem $mr={30}>View</MenuItem>
            <MenuItem $mr={30}>Arrange</MenuItem>
            <MenuItem $mr={32}>Extras</MenuItem>
            <MenuItem $mr={32}>Help</MenuItem>
            <Saving>Saving...</Saving>
          </MenuBar>
        </TitleCol>
        <HeadRight>
          <UserRow>
            <UserName>Majedah matar Alotibi</UserName>
            <CaretDown ml={12} />
            <SunIcon viewBox="0 0 34 34" fill="none" stroke="#9a9a9a" strokeWidth="2.4">
              <circle cx="17" cy="17" r="6" />
              <path d="M17 1 V7 M17 27 V33 M1 17 H7 M27 17 H33 M5.7 5.7 L9.9 9.9 M24.1 24.1 L28.3 28.3 M5.7 28.3 L9.9 24.1 M24.1 9.9 L28.3 5.7" />
            </SunIcon>
          </UserRow>
          <ShareRow>
            <svg width="40" height="40" viewBox="0 0 40 40">
              <path d="M3 0 H37 A3 3 0 0 1 40 3 V39 L32 31 H3 A3 3 0 0 1 0 28 V3 A3 3 0 0 1 3 0 Z" fill="#9b9b9b" />
              <path d="M8 9 H32 M8 15 H32 M8 21 H32" stroke="#1b1b1b" strokeWidth="3" />
            </svg>
            <ShareBtn>
              <svg width="30" height="30" viewBox="0 0 30 30"><path d="M15 1 C10 1 8 5 9 10 C10 14 12 15 11 17 C9 21 1 21 1 27 V29 H29 V27 C29 21 21 21 19 17 C18 15 20 14 21 10 C22 5 20 1 15 1 Z" fill="#ededed" /></svg>
              Share
            </ShareBtn>
          </ShareRow>
        </HeadRight>
      </Header>

      <Toolbar>
        <ToolGroup $w={133} $pl={44} $gap={12}>
          <svg width="34" height="34" viewBox="0 0 34 34" fill="none" stroke={G} strokeWidth="2.6">
            <rect x="1" y="1" width="32" height="32" /><path d="M1 9 H33 M22 9 V33" />
          </svg>
          <CaretDown />
        </ToolGroup>
        <ToolGroup $w={158} $pl={29}><ZoomValue>100%</ZoomValue><CaretDown c="#777" /></ToolGroup>
        <ToolGroup $w={145} $pl={31} $gap={31}><ZoomIcon /><ZoomIcon minus /></ToolGroup>
        <ToolGroup $w={147} $pl={30} $gap={29}>
          <svg width="30" height="28" viewBox="0 0 30 28"><path d="M3 13 L11 4 V9 C22 9 29 16 28 26 C25 19 20 17 11 17 V22 Z" fill={G} /></svg>
          <svg width="30" height="28" viewBox="0 0 30 28"><path d="M27 13 L19 4 V9 C8 9 1 16 2 26 C5 19 10 17 19 17 V22 Z" fill={D} /></svg>
        </ToolGroup>
        <ToolGroup $w={86} $pl={32}>
          <svg width="27" height="32" viewBox="0 0 27 32" fill={D}><rect x="0" y="3" width="27" height="4" /><rect x="8" y="0" width="11" height="4" /><rect x="3" y="8" width="21" height="24" /></svg>
        </ToolGroup>
        <ToolGroup $w={145} $pl={30} $gap={31}>
          <svg width="28" height="32" viewBox="0 0 28 32" fill="none" stroke={D} strokeWidth="2.5"><rect x="1" y="1" width="12" height="12" /><rect x="15" y="19" width="12" height="12" /><rect x="6" y="7" width="16" height="18" fill={D} /></svg>
          <svg width="30" height="32" viewBox="0 0 30 32" fill="none" stroke={D} strokeWidth="2.5"><rect x="7" y="7" width="16" height="18" fill={D} /><rect x="1" y="1" width="13" height="13" fill="#1b1b1b" /><rect x="16" y="18" width="13" height="13" fill="#1b1b1b" /></svg>
        </ToolGroup>
        <ToolGroup $w={207} $pl={31}>
          <svg width="32" height="32" viewBox="0 0 32 32" fill={D}><path d="M3 1 L12 9 M14 5 L26 17 L14 28 L2 17 Z" stroke={D} strokeWidth="2" /><circle cx="28" cy="25" r="3.5" /></svg>
          <ToolSvg $ml={22} width="42" height="38" viewBox="0 0 42 38" fill={D}><path d="M8 24 L27 3 L34 9 L15 29 L8 29 Z" /><rect x="0" y="31" width="42" height="7" /></ToolSvg>
          <ToolSvg $ml={26} width="30" height="30" viewBox="0 0 30 30" fill="none" stroke={D} strokeWidth="3"><rect x="1.5" y="1.5" width="24" height="22" /><path d="M27 6 H29 V29 H6 V26" /></ToolSvg>
        </ToolGroup>
        <ToolGroup $w={202} $pl={29}>
          <svg width="31" height="14" viewBox="0 0 31 14"><path d="M0 7 H26" stroke={G} strokeWidth="2.4" /><polygon points="25,1 31,7 25,13" fill={G} /></svg>
          <CaretDown ml={11} />
          <ToolSvg $ml={29} width="30" height="30" viewBox="0 0 30 30" fill="none" stroke={G} strokeWidth="2"><rect x="24" y="1" width="5" height="5" /><rect x="1" y="24" width="5" height="5" /><path d="M26.5 6 V15 H3.5 V24" /></ToolSvg>
          <CaretDown ml={13} />
        </ToolGroup>
        <ToolGroup $w={114} $pl={29} $gap={16}>
          <svg width="26" height="26" viewBox="0 0 26 26"><path d="M13 0 V26 M0 13 H26" stroke="#f2f2f2" strokeWidth="6" /></svg>
          <CaretDown />
        </ToolGroup>
        <ToolGroup $w={110} $pl={24} $gap={13} $last>
          <svg width="29" height="28" viewBox="0 0 29 28" fill="none" stroke={G} strokeWidth="2"><rect x="1" y="1" width="27" height="26" /><path d="M1 10 H28 M1 18 H28 M10 1 V27 M19 1 V27" /></svg>
          <CaretDown />
        </ToolGroup>
        <ToolRight>
          <svg width="24" height="24" viewBox="0 0 24 24" fill="none" stroke="#8a8a8a" strokeWidth="2.4"><path d="M1 8 V1 H8 M16 1 H23 V8 M23 16 V23 H16 M8 23 H1 V16" /></svg>
          <svg width="21" height="20" viewBox="0 0 21 20" fill="none" stroke="#8a8a8a" strokeWidth="2.4"><rect x="1" y="1" width="19" height="18" /><rect x="13" y="1" width="7" height="18" fill="#8a8a8a" /></svg>
          <svg width="21" height="24" viewBox="0 0 21 24" fill="none" stroke="#8a8a8a" strokeWidth="2.6"><path d="M2 11 L10.5 2 L19 11 M2 22 L10.5 13 L19 22" /></svg>
        </ToolRight>
      </Toolbar>

      <Body>
        <Sidebar>
          <SearchWrap>
            <SearchBox>
              <SearchText>Search Shapes</SearchText>
              <svg width="25" height="24" viewBox="0 0 25 24" fill="none" stroke="#8a8a8a" strokeWidth="3.4"><circle cx="10" cy="10" r="7.5" /><path d="M15 15 L24 22" strokeWidth="4" /></svg>
            </SearchBox>
          </SearchWrap>
          <SectionHead $h={69} $open>
            <svg width="17" height="10" viewBox="0 0 17 10"><polygon points="0,0 17,0 8.5,10" fill="#6f6f6f" /></svg>
            <SectionLabel $ml={12} $grow>Scratchpad</SectionLabel>
            <HeadTools>
              <QMark>?</QMark>
              <HeadTool $ml={17} width="17" height="17" viewBox="0 0 17 17"><path d="M8.5 0 V17 M0 8.5 H17" stroke="#8a8a8a" strokeWidth="2" /></HeadTool>
              <HeadTool $ml={20} width="22" height="22" viewBox="0 0 22 22" fill="none" stroke="#8a8a8a" strokeWidth="2.2"><path d="M2 20 L3 15 L16 2 L20 6 L7 19 Z" /></HeadTool>
              <HeadTool $ml={22} width="16" height="16" viewBox="0 0 16 16"><path d="M1 1 L15 15 M15 1 L1 15" stroke="#8a8a8a" strokeWidth="2" /></HeadTool>
            </HeadTools>
          </SectionHead>
          <DropWrap><DropZone>Drag elements here</DropZone></DropWrap>
          <SectionHead $h={72} $open>
            <svg width="17" height="10" viewBox="0 0 17 10"><polygon points="0,0 17,0 8.5,10" fill="#6f6f6f" /></svg>
            <SectionLabel $ml={12}>General</SectionLabel>
          </SectionHead>
          <PaletteArt />
          {categories.map(c => (
            <SectionHead key={c} $h={70.6}>
              <svg width="9" height="15" viewBox="0 0 9 15"><polygon points="0,0 9,7.5 0,15" fill="#5f5f5f" /></svg>
              <SectionLabel $ml={17}>{c}</SectionLabel>
            </SectionHead>
          ))}
          <MoreWrap>
            <MoreBtn>
              <svg width="20" height="20" viewBox="0 0 20 20"><path d="M10 1 V19 M1 10 H19" stroke="#111" strokeWidth="3" /></svg>
              More Shapes
            </MoreBtn>
          </MoreWrap>
        </Sidebar>

        <CanvasCol>
          <CanvasArea>
            <GridPane>
              <Wires viewBox="0 0 1808 1580" fill="none" stroke="#efefef" strokeWidth="2">
                <line x1="435" y1="0" x2="435" y2="1580" stroke="#4a4a4a" strokeDasharray="10 6" />
                <line x1="915" y1="592" x2="1235" y2="592" />
                <line x1="915" y1="1130" x2="1235" y2="1130" strokeWidth="2.4" />
                <line x1="717" y1="730" x2="717" y2="910" />
                <line x1="1435" y1="730" x2="1435" y2="910" />
                <path d="M1664.5 86 V51 H1509.5 V151 H1460" strokeWidth="3" />
                <polygon points="1447,151 1466,142 1461,151 1466,160" fill="#efefef" stroke="none" />
              </Wires>
              <Lane $x={515} $y={410} $w={400}><LaneHead>Product</LaneHead><LaneRail /></Lane>
              <Lane $x={1235} $y={410} $w={400}><LaneHead>User</LaneHead><LaneRail /></Lane>
              <Lane $x={515} $y={910} $w={400}><LaneHead>Order</LaneHead><LaneRail /></Lane>
              <Lane $x={1235} $y={910} $w={400}><LaneHead>Category</LaneHead><LaneRail /></Lane>
              <Lane $x={-7} $y={630} $w={362}><LaneHead>Cart</LaneHead></Lane>

              <Note $x={1181} $y={81}>Hii majedah it all right welcome any time XD</Note>
              <Note $x={1175} $y={136}>as long as it is not my bedroom you can check</Note>
              <Note $x={1175} $y={165}>any time you want</Note>
              <Note $x={1181} $y={221}>Bruh i talk too much</Note>
              <Note $x={810} $y={141}>hi, layan</Note>
              <Note $x={813} $y={172}>sorry i just</Note>
              <Note $x={814} $y={201}>wanted to</Note>
              <Note $x={813} $y={229}>check :)</Note>
              <Note $x={1634} $y={92}>this one</Note>
              <Note $x={1634} $y={122}>got me</Note>
              <Note $x={1634} $y={149}>LOL</Note>
              <Note $x={1474} $y={181}>hahahahahaha</Note>
              <Pill>Layan Ahmed S...</Pill>

              <Note $x={945} $y={574} $size={22}>many</Note>
              <Note $x={1077} $y={593} $size={22} $bg>create</Note>
              <Note $x={1216} $y={574} $size={22}>one</Note>
              <Note $x={719} $y={759} $size={22} $bg>many</Note>
              <Note $x={719} $y={823} $size={22} $bg>has</Note>
              <Note $x={719} $y={893} $size={22} $bg>One</Note>
              <Note $x={1436} $y={823} $size={22} $bg>create/update</Note>
              <Note $x={953} $y={1129} $size={22} $bg>Source</Note>
              <Note $x={1077} $y={1131} $size={22} $bg>Label</Note>
              <Note $x={1203} $y={1129} $size={22} $bg>Target</Note>
              <RemoteCursor />
            </GridPane>
            <VScroll />
            <HScroll />
          </CanvasArea>
          <PageBar>
            <PageMenu>
              <svg width="10" height="34" viewBox="0 0 10 34"><circle cx="5" cy="5" r="4" fill="#8a8a8a" /><circle cx="5" cy="17" r="4" fill="#8a8a8a" /><circle cx="5" cy="29" r="4" fill="#8a8a8a" /></svg>
            </PageMenu>
            <PageTab>
              Page-1
              <svg width="13" height="9" viewBox="0 0 13 9"><path d="M1 8 L6.5 2 L12 8" fill="none" stroke="#8a8a8a" strokeWidth="2" /></svg>
            </PageTab>
            <PageAdd><svg width="28" height="28" viewBox="0 0 28 28"><path d="M14 0 V28 M0 14 H28" stroke="#8a8a8a" strokeWidth="3" /></svg></PageAdd>
          </PageBar>
        </CanvasCol>

        <Panel>
          <PanelTabs>
            <PanelTab $active $w={214}>Diagram</PanelTab>
            <PanelTab $w={213}>Style</PanelTab>
            <PanelClose>
              <svg width="18" height="18" viewBox="0 0 18 18"><path d="M2 2 L16 16 M16 2 L2 16" stroke="#546a85" strokeWidth="4" /></svg>
            </PanelClose>
          </PanelTabs>

          <PanelSection $pt={29} $pb={18}>
            <SectionTitle>View</SectionTitle>
            <Row $h={44} $mt={17}>
              <CheckBox $on><Check /></CheckBox>
              <RowLabel $w={160}>Grid</RowLabel>
              <NumInput>10 pt</NumInput>
              <Stepper>
                <svg width="16" height="9" viewBox="0 0 16 9"><polygon points="8,0 16,9 0,9" fill="#666" /></svg>
                <svg width="16" height="9" viewBox="0 0 16 9"><polygon points="0,0 16,0 8,9" fill="#666" /></svg>
              </Stepper>
              <ColorBtn>
                <Swatch />
                <svg width="24" height="24" viewBox="0 0 24 24" fill="none" stroke="#aaa" strokeWidth="1.8"><path d="M15 5 L19 9 L7 21 L3 21 L3 17 Z" /><path d="M13 3 L21 11 M17 5 L20 2 L22 4 L19 7" /></svg>
              </ColorBtn>
            </Row>
            <Row $h={46}><CheckBox $on><Check /></CheckBox><RowLabel>Page View</RowLabel></Row>
            <Row $h={46}><RowLabel $ml={39} $w={161}>Background</RowLabel><FlatBtn $w={220} $h={44}>Change...</FlatBtn></Row>
            <Row $h={54}><CheckBox /><RowLabel>Background Color</RowLabel></Row>
            <Row $h={42}><CheckBox /><RowLabel $w={169}>Shadow</RowLabel><CheckBox /><RowLabel>Sketch</RowLabel></Row>
          </PanelSection>

          <PanelSection $pt={24} $pb={14}>
            <SectionTitle>Options</SectionTitle>
            <Row $h={48} $mt={11}><CheckBox $on><Check /></CheckBox><RowLabel>Connection Arrows</RowLabel></Row>
            <Row $h={48}><CheckBox $on><Check /></CheckBox><RowLabel>Connection Points</RowLabel></Row>
            <Row $h={48}><CheckBox $on><Check /></CheckBox><RowLabel>Guides</RowLabel></Row>
            <Row $h={48}><CheckBox $on><Check /></CheckBox><RowLabel>Autosave</RowLabel></Row>
          </PanelSection>

          <PanelSection $pt={24} $pb={17}>
            <SectionTitle>Paper Size</SectionTitle>
            <SelectBox>
              A4 (210 mm x 297 mm)
              <svg width="18" height="11" viewBox="0 0 18 11"><path d="M1 1 L9 9 L17 1" fill="none" stroke="#e0e0e0" strokeWidth="2" /></svg>
            </SelectBox>
            <Row $h={46} $mt={16}>
              <Radio $on $ml={18} />
              <RowLabel>Portrait</RowLabel>
              <Radio $ml={21} />
              <RowLabel>Landscape</RowLabel>
            </Row>
          </PanelSection>

          <PanelSection $pt={25} $pb={24}>
            <FlatBtn $h={38}>Edit Data...</FlatBtn>
            <FlatBtn $h={38} $mt={6}>Clear Default Style</FlatBtn>
          </PanelSection>
        </Panel>
      </Body>
    </Shell>
  );
}
